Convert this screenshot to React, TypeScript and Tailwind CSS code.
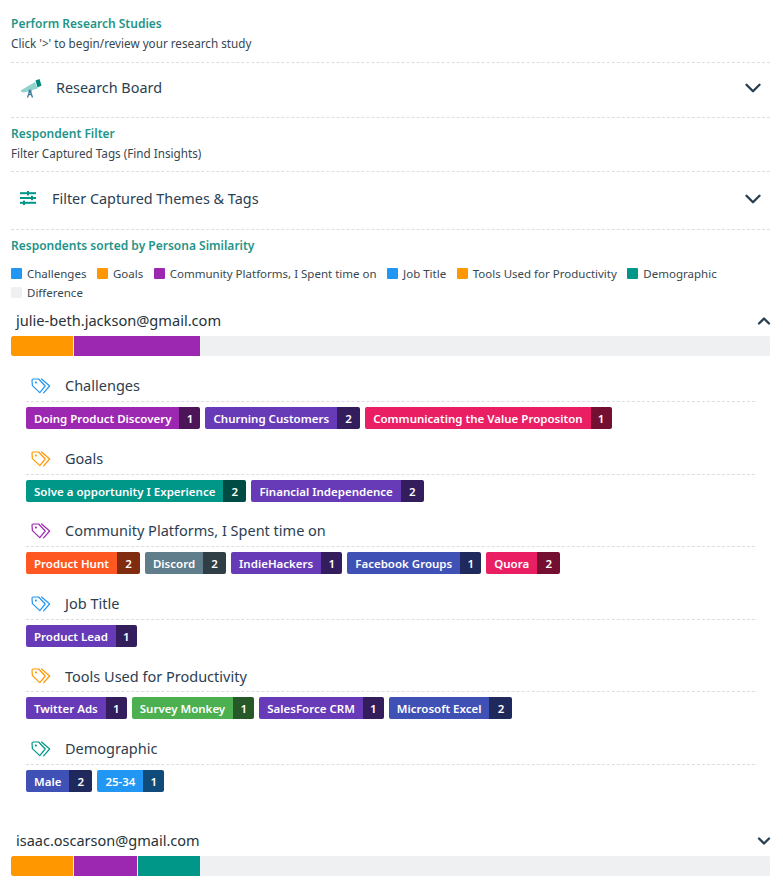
import type { ReactNode } from 'react';
import { ChevronDown, ChevronUp } from 'lucide-react';

const COLORS = {
  blue: { main: 'bg-[#2196f3]', dark: 'bg-[#114b7a]' },
  orange: { main: 'bg-[#ff9800]', dark: 'bg-[#804c00]' },
  purple: { main: 'bg-[#9c27b0]', dark: 'bg-[#4e1458]' },
  deep: { main: 'bg-[#673ab7]', dark: 'bg-[#341d5c]' },
  pink: { main: 'bg-[#e91e63]', dark: 'bg-[#750f32]' },
  teal: { main: 'bg-[#009688]', dark: 'bg-[#004b44]' },
  red: { main: 'bg-[#ff5722]', dark: 'bg-[#802c11]' },
  grey: { main: 'bg-[#607d8b]', dark: 'bg-[#303f46]' },
  indigo: { main: 'bg-[#3f51b5]', dark: 'bg-[#20295b]' },
  green: { main: 'bg-[#4caf50]', dark: 'bg-[#265828]' },
};

type ColorName = keyof typeof COLORS;

const legend = [
  { label: 'Challenges', color: 'bg-[#2196f3]' },
  { label: 'Goals', color: 'bg-[#ff9800]' },
  { label: 'Community Platforms, I Spent time on', color: 'bg-[#9c27b0]' },
  { label: 'Job Title', color: 'bg-[#2196f3]' },
  { label: 'Tools Used for Productivity', color: 'bg-[#ff9800]' },
  { label: 'Demographic', color: 'bg-[#009688]' },
  { label: 'Difference', color: 'bg-[#eff0f2]' },
];

const sections: { title: string; icon: string; tags: { name: string; count: number; color: ColorName }[] }[] = [
  {
    title: 'Challenges',
    icon: '#2196f3',
    tags: [
      { name: 'Doing Product Discovery', count: 1, color: 'purple' },
      { name: 'Churning Customers', count: 2, color: 'deep' },
      { name: 'Communicating the Value Propositon', count: 1, color: 'pink' },
    ],
  },
  {
    title: 'Goals',
    icon: '#ff9800',
    tags: [
      { name: 'Solve a opportunity I Experience', count: 2, color: 'teal' },
      { name: 'Financial Independence', count: 2, color: 'deep' },
    ],
  },
  {
    title: 'Community Platforms, I Spent time on',
    icon: '#9c27b0',
    tags: [
      { name: 'Product Hunt', count: 2, color: 'red' },
      { name: 'Discord', count: 2, color: 'grey' },
      { name: 'IndieHackers', count: 1, color: 'deep' },
      { name: 'Facebook Groups', count: 1, color: 'indigo' },
      { name: 'Quora', count: 2, color: 'pink' },
    ],
  },
  {
    title: 'Job Title',
    icon: '#2196f3',
    tags: [{ name: 'Product Lead', count: 1, color: 'deep' }],
  },
  {
    title: 'Tools Used for Productivity',
    icon: '#ff9800',
    tags: [
      { name: 'Twitter Ads', count: 1, color: 'deep' },
      { name: 'Survey Monkey', count: 1, color: 'green' },
      { name: 'SalesForce CRM', count: 1, color: 'deep' },
      { name: 'Microsoft Excel', count: 2, color: 'indigo' },
    ],
  },
  {
    title: 'Demographic',
    icon: '#009688',
    tags: [
      { name: 'Male', count: 2, color: 'indigo' },
      { name: '25-34', count: 1, color: 'blue' },
    ],
  },
];

const TagsIcon = ({ color }: { color: string }) => (
  <svg width="20" height="16" viewBox="0 0 20 16" fill="none" stroke={color} strokeWidth="1.2" strokeLinejoin="round" strokeLinecap="round">
    <path d="M1 2.2 C1 1.5 1.5 1 2.2 1 H7.6 L14.2 8 L8.8 14.6 L1.4 7.6 Z" />
    <path d="M10.6 1 L18.6 8 L12.6 14.8" />
    <rect x="4" y="3.6" width="1.8" height="1.8" fill={color} stroke="none" />
  </svg>
);

const TelescopeIcon = () => (
  <svg width="22" height="20" viewBox="0 0 22 20">
    <path d="M0.5 12.5 L15 4 L17.5 10.5 L4 14.5 Q1.5 14.8 0.5 12.5 Z" fill="#8fd3cc" />
    <path d="M15.5 2.5 L19.5 1 L21.5 7.5 L17.5 9.5 Z" fill="#00897b" />
    <path d="M9.5 13.5 L7.5 19.5 M10.5 13.5 L12.5 19.5 M8.5 16.5 H11.5" stroke="#3f7f9c" strokeWidth="1.3" fill="none" />
    <circle cx="10" cy="13" r="1.6" fill="#3f7f9c" />
  </svg>
);

const SlidersIcon = () => (
  <svg width="16" height="14" viewBox="0 0 16 14" fill="#009688">
    <rect x="0" y="1.2" width="16" height="2" />
    <rect x="7" y="0" width="2" height="4.4" />
    <rect x="0" y="6" width="16" height="2" />
    <rect x="11" y="4.8" width="2" height="4.4" />
    <rect x="0" y="10.8" width="16" height="2" />
    <rect x="3" y="9.6" width="2" height="4.4" />
  </svg>
);

const Heading = ({ title, sub }: { title: string; sub?: string }) => (
  <div>
    <div className="text-[12px] leading-[16px] font-semibold text-[#1f9488]">{title}</div>
    {sub && <div className="mt-[3px] text-[11.7px] leading-[16px] text-[#37474f]">{sub}</div>}
  </div>
);

const AccordionRow = ({ icon, label, height, gap }: { icon: ReactNode; label: string; height: string; gap: string }) => (
  <div className={`flex items-center justify-between border-y border-dashed border-[#dedede] pr-[4px] pb-[4px] pl-[9px] ${height}`}>
    <div className={`flex items-center ${gap}`}>
      {icon}
      <span className="text-[14.4px] text-[#2c3e50]">{label}</span>
    </div>
    <ChevronDown className="h-[26px] w-[26px] text-[#263f52]" strokeWidth={2.2} />
  </div>
);

const Tag = ({ name, count, color }: { name: string; count: number; color: ColorName }) => (
  <span className="flex h-[22px] items-stretch overflow-hidden rounded-[2px] text-[11.5px] leading-[23px] font-semibold text-white">
    <span className={`px-2 ${COLORS[color].main}`}>{name}</span>
    <span className={`text-center ${count === 1 ? 'w-[21px]' : 'w-[23px]'} ${COLORS[color].dark}`}>{count}</span>
  </span>
);

const Bar = ({ parts }: { parts: { width: string; color: string }[] }) => (
  <div className="flex h-[20px] gap-px overflow-hidden rounded-[2px] bg-[#eff0f2]">
    {parts.map((p, i) => (
      <div key={i} className={`${p.width} ${p.color}`} />
    ))}
  </div>
);

export default function App() {
  return (
    <div className="min-h-[888px] overflow-hidden bg-white pt-[16px] pr-[13px] pl-[11px] text-[#37474f] [font-family:'Noto_Sans','Open_Sans',sans-serif]">
      <Heading title="Perform Research Studies" sub="Click '>' to begin/review your research study" />
      <div className="mt-[11px]">
        <AccordionRow icon={<TelescopeIcon />} label="Research Board" height="h-[56px]" gap="gap-[14px]" />
      </div>
      <div className="mt-[8px]">
        <Heading title="Respondent Filter" sub="Filter Captured Tags (Find Insights)" />
      </div>
      <div className="mt-[10px]">
        <AccordionRow icon={<SlidersIcon />} label="Filter Captured Themes & Tags" height="h-[59px]" gap="gap-[16px]" />
      </div>
      <div className="mt-[8px]">
        <Heading title="Respondents sorted by Persona Similarity" />
      </div>

      <div className="mt-[10px] flex flex-wrap gap-x-[10.5px] text-[11.5px] leading-[19px]">
        {legend.map((item) => (
          <div key={item.label} className="flex items-center gap-[5px]">
            <span className={`h-[11px] w-[11px] rounded-[1px] ${item.color}`} />
            <span>{item.label}</span>
          </div>
        ))}
      </div>

      <div className="mt-[8px] flex h-[22px] items-center justify-between pl-[5px]">
        <span className="text-[14.6px] text-[#263238]">julie-beth.jackson@gmail.com</span>
        <ChevronUp className="-mr-[4px] h-[20px] w-[20px] text-[#263f52]" strokeWidth={2.8} />
      </div>
      <div className="mt-[4px]">
        <Bar
          parts={[
            { width: 'w-[62px]', color: 'bg-[#ff9800] rounded-l-[2px]' },
            { width: 'w-[126px]', color: 'bg-[#9c27b0]' },
          ]}
        />
      </div>

      <div className="mt-[15px] flex flex-col gap-[14.6px] px-[15px]">
        {sections.map((s) => (
          <div key={s.title}>
            <div className="flex h-[31px] items-center gap-[14px] border-b border-dashed border-[#dedede] pl-[5px]">
              <TagsIcon color={s.icon} />
              <span className="text-[14.5px] text-[#2c3e50]">{s.title}</span>
            </div>
            <div className="mt-[5px] flex gap-[5px]">
              {s.tags.map((t) => (
                <Tag key={t.name} {...t} />
              ))}
            </div>
          </div>
        ))}
      </div>

      <div className="mt-[38px] flex h-[22px] items-center justify-between pl-[5px]">
        <span className="text-[14.5px] text-[#263238]">isaac.oscarson@gmail.com</span>
        <ChevronDown className="-mr-[4px] h-[20px] w-[20px] text-[#263f52]" strokeWidth={2.8} />
      </div>
      <div className="mt-[4px]">
        <Bar
          parts={[
            { width: 'w-[62px]', color: 'bg-[#ff9800] rounded-l-[2px]' },
            { width: 'w-[63px]', color: 'bg-[#9c27b0]' },
            { width: 'w-[62px]', color: 'bg-[#009688]' },
          ]}
        />
      </div>
    </div>
  );
}
